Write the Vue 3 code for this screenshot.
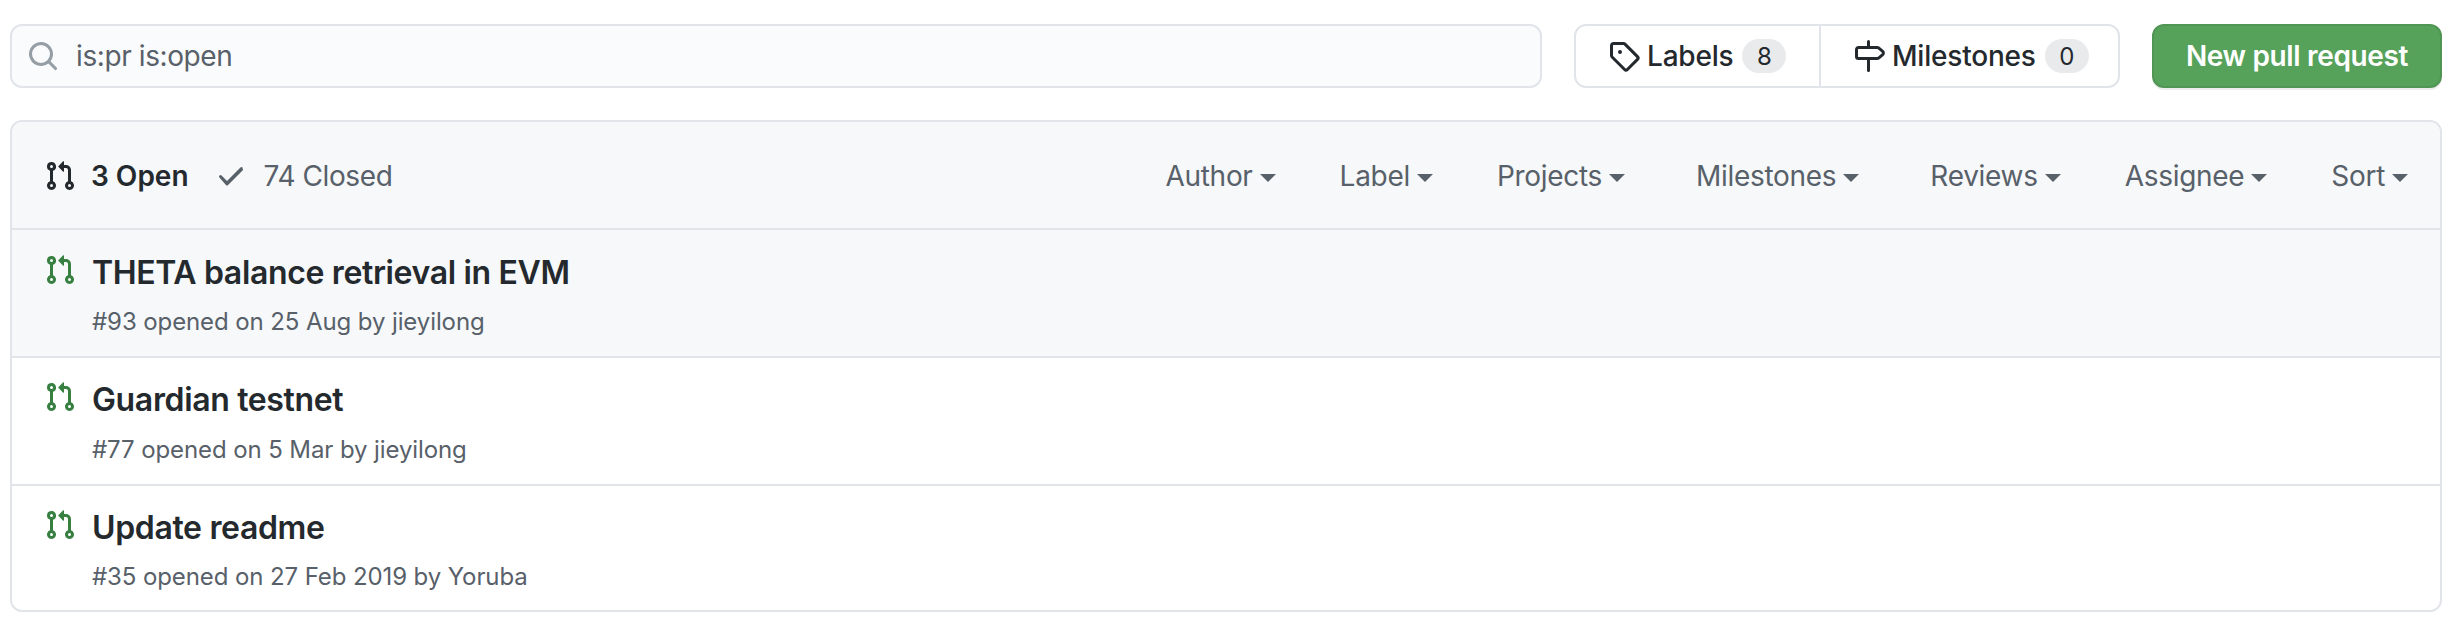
<template>
  <div class="page">
    <div class="toolbar">
      <div class="search">
        <svg class="search-icon" viewBox="0 0 16 16" width="32" height="32"><path fill-rule="evenodd" :d="icons.search" /></svg>
        <span class="search-text">is:pr is:open</span>
      </div>
      <div class="nav-group">
        <div class="nav-item nav-labels">
          <svg viewBox="0 0 16 16" width="32" height="32"><path fill-rule="evenodd" :d="icons.tag" /></svg>
          <span>Labels</span>
          <span class="counter">8</span>
        </div>
        <div class="nav-item nav-milestones">
          <svg viewBox="0 0 16 16" width="32" height="32"><path fill-rule="evenodd" :d="icons.milestone" /></svg>
          <span>Milestones</span>
          <span class="counter">0</span>
        </div>
      </div>
      <div class="new-btn">New pull request</div>
    </div>

    <div class="box">
      <div class="box-header">
        <div class="states">
          <span class="state state-open">
            <svg viewBox="0 0 16 16" width="32" height="32"><path fill-rule="evenodd" :d="icons.pr" /></svg>
            3 Open
          </span>
          <span class="state state-closed">
            <svg viewBox="0 0 16 16" width="32" height="32"><path fill-rule="evenodd" :d="icons.check" /></svg>
            74 Closed
          </span>
        </div>
        <div class="filters">
          <span v-for="f in filters" :key="f" class="filter" :class="{ 'filter-wide': f === 'Milestones' }">{{ f }}<i class="caret"></i></span>
        </div>
      </div>
      <div v-for="(pr, i) in pulls" :key="pr.id" class="row" :class="{ 'row-hover': i === 0 }">
        <svg class="row-icon" viewBox="0 0 16 16" width="32" height="32"><path fill-rule="evenodd" :d="icons.pr" /></svg>
        <div class="row-body">
          <div class="row-title">{{ pr.title }}</div>
          <div class="row-meta">#{{ pr.id }} opened on {{ pr.date }} by {{ pr.author }}</div>
        </div>
      </div>
    </div>
  </div>
</template>

<script setup>
const icons = {
  search: 'M11.5 7a4.499 4.499 0 11-8.998 0A4.499 4.499 0 0111.5 7zm-.82 4.74a6 6 0 111.06-1.06l3.04 3.04a.75.75 0 11-1.06 1.06l-3.04-3.04z',
  tag: 'M2.5 7.775V2.75a.25.25 0 01.25-.25h5.025a.25.25 0 01.177.073l6.25 6.25a.25.25 0 010 .354l-5.025 5.025a.25.25 0 01-.354 0l-6.25-6.25a.25.25 0 01-.073-.177zm-1.5 0V2.75C1 1.784 1.784 1 2.75 1h5.025c.464 0 .91.184 1.238.513l6.25 6.25a1.75 1.75 0 010 2.474l-5.026 5.026a1.75 1.75 0 01-2.474 0l-6.25-6.25A1.75 1.75 0 011 7.775zM6 5a1 1 0 100 2 1 1 0 000-2z',
  milestone: 'M7.75 0a.75.75 0 01.75.75V3h3.634c.414 0 .814.147 1.13.414l2.07 1.75a1.75 1.75 0 010 2.672l-2.07 1.75a1.75 1.75 0 01-1.13.414H8.5v5.25a.75.75 0 11-1.5 0V10H2.75A1.75 1.75 0 011 8.25v-3.5C1 3.784 1.784 3 2.75 3H7V.75A.75.75 0 017.75 0zm0 4.5H2.75a.25.25 0 00-.25.25v3.5c0 .138.112.25.25.25h9.384a.25.25 0 00.161-.06l2.07-1.75a.25.25 0 000-.38l-2.07-1.75a.25.25 0 00-.161-.06H7.75z',
  pr: 'M7.177 3.073L9.573.677A.25.25 0 0110 .854v4.792a.25.25 0 01-.427.177L7.177 3.427a.25.25 0 010-.354zM3.75 2.5a.75.75 0 100 1.5.75.75 0 000-1.5zm-2.25.75a2.25 2.25 0 113 2.122v5.256a2.251 2.251 0 11-1.5 0V5.372A2.25 2.25 0 011.5 3.25zM11 2.5h-1V4h1a1 1 0 011 1v5.628a2.251 2.251 0 101.5 0V5A2.5 2.5 0 0011 2.5zm1 10.25a.75.75 0 111.5 0 .75.75 0 01-1.5 0zM3.75 12a.75.75 0 100 1.5.75.75 0 000-1.5z',
  check: 'M13.78 4.22a.75.75 0 010 1.06l-7.25 7.25a.75.75 0 01-1.06 0L2.22 8.78a.75.75 0 011.06-1.06L6 10.44l6.72-6.72a.75.75 0 011.06 0z'
}

const filters = ['Author', 'Label', 'Projects', 'Milestones', 'Reviews', 'Assignee', 'Sort']

const pulls = [
  { id: 93, title: 'THETA balance retrieval in EVM', date: '25 Aug', author: 'jieyilong' },
  { id: 77, title: 'Guardian testnet', date: '5 Mar', author: 'jieyilong' },
  { id: 35, title: 'Update readme', date: '27 Feb 2019', author: 'Yoruba' }
]
</script>

<style>
html, body {
  margin: 0;
  background: #fff;
}
</style>

<style scoped>
* {
  box-sizing: border-box;
}

.page {
  width: 2464px;
  height: 622px;
  padding: 24px 22px 0 10px;
  font-family: Inter, "Noto Sans", sans-serif;
  font-size: 28px;
  color: #24292e;
  overflow: hidden;
}

/* TOP BAR */
.toolbar {
  display: flex;
  height: 64px;
}

.search {
  width: 1532px;
  height: 64px;
  display: flex;
  align-items: center;
  padding-left: 15px;
  gap: 17px;
  background: #fafbfc;
  border: 2px solid #e1e4e8;
  border-radius: 12px;
  margin-right: 32px;
}

.search-icon {
  fill: #959da5;
}

.search-text {
  color: #586069;
  letter-spacing: -0.4px;
}

.nav-group {
  width: 546px;
  height: 64px;
  display: flex;
  border: 2px solid #e1e4e8;
  border-radius: 12px;
  margin-right: 32px;
}

.nav-item {
  display: flex;
  align-items: center;
  gap: 7px;
  font-weight: 500;
  letter-spacing: -0.2px;
}

.nav-item svg {
  fill: #24292e;
}

.nav-labels {
  width: 245px;
  padding-left: 32px;
  border-right: 2px solid #e1e4e8;
}

.nav-milestones {
  flex: 1;
  padding-left: 32px;
}

.counter {
  height: 34px;
  min-width: 44px;
  margin-left: 2px;
  padding: 0 12px;
  display: flex;
  align-items: center;
  justify-content: center;
  font-size: 24px;
  font-weight: 400;
  background: #e9eaec;
  border-radius: 40px;
}

.new-btn {
  width: 290px;
  height: 64px;
  display: flex;
  align-items: center;
  justify-content: center;
  color: #fff;
  font-weight: 600;
  letter-spacing: -0.35px;
  background: #56a25b;
  border: 2px solid #4f9654;
  border-radius: 12px;
  box-shadow: 0 2px 0 rgba(27, 31, 35, 0.08);
}

/* LIST */
.box {
  margin-top: 32px;
  width: 2432px;
  height: 492px;
  border: 2px solid #e1e4e8;
  border-radius: 12px;
  overflow: hidden;
}

.box-header {
  height: 108px;
  display: flex;
  align-items: center;
  justify-content: space-between;
  padding: 2px 32px 0;
  background: #f6f8fa;
  border-bottom: 2px solid #e1e4e8;
}

.states {
  display: flex;
  align-items: center;
  gap: 26px;
}

.state {
  display: flex;
  align-items: center;
  gap: 15px;
}

.state svg {
  fill: currentColor;
}

.state-open {
  font-weight: 600;
  color: #24292e;
}

.state-closed {
  gap: 17px;
  color: #586069;
  letter-spacing: -0.4px;
}

.filters {
  display: flex;
  align-items: center;
  gap: 64px;
}

.filter {
  display: flex;
  align-items: center;
  color: #586069;
  letter-spacing: -0.3px;
}

.filter-wide {
  margin: 0 7px;
}

.caret {
  width: 0;
  height: 0;
  margin-left: 7px;
  margin-top: 3px;
  border-top: 8px solid #586069;
  border-left: 8px solid transparent;
  border-right: 8px solid transparent;
}

.row {
  display: flex;
  height: 128px;
  padding: 23px 32px 0;
  gap: 16px;
  border-bottom: 2px solid #e1e4e8;
}

.row:last-child {
  height: 124px;
  border-bottom: none;
}

.row-hover {
  background: #f6f8fa;
  padding-top: 24px;
}

.row-icon {
  fill: #378041;
  flex: none;
}

.row-title {
  font-size: 32px;
  font-weight: 600;
  line-height: 38px;
  letter-spacing: -0.35px;
}

.row-meta {
  margin-top: 13px;
  font-size: 24px;
  line-height: 36px;
  letter-spacing: -0.1px;
  color: #586069;
}

.row-hover .row-meta {
  margin-top: 12px;
}

.row:last-child .row-meta {
  margin-top: 12px;
}
</style>
